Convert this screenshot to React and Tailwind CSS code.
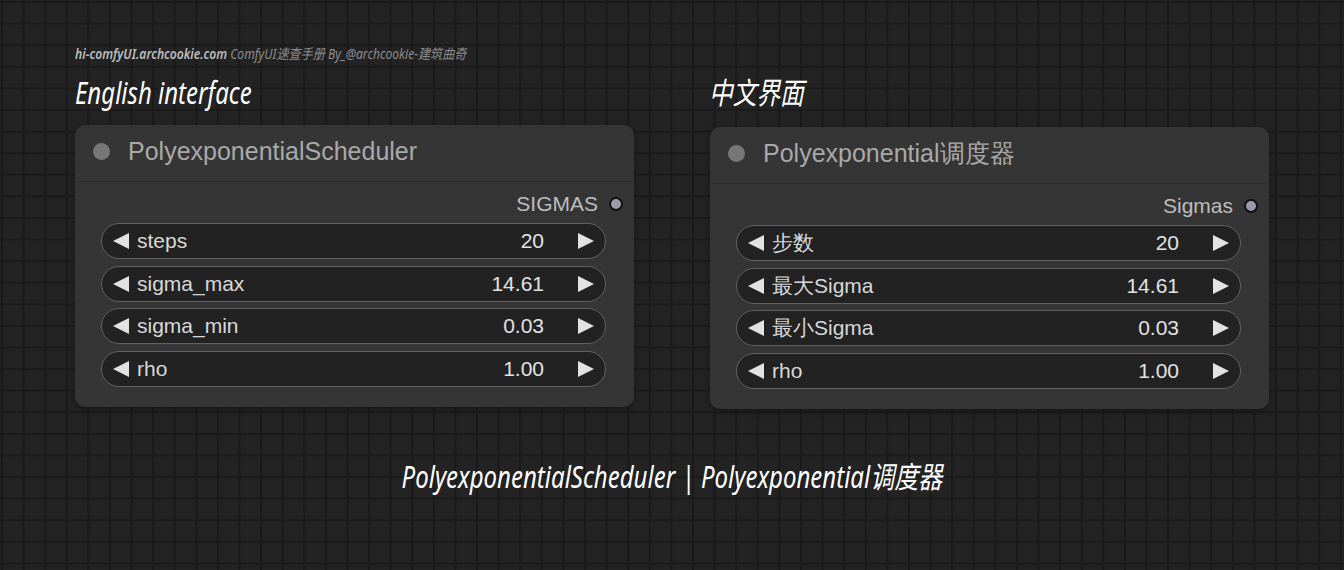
import React from 'react';

const sans = 'font-["Liberation_Sans",Arial,sans-serif]';
const cond = 'font-["Noto_Sans","Noto_Sans_CJK_SC",sans-serif]';

function Arrow({ dir }) {
  return (
    <svg width="18" height="18" viewBox="0 0 18 18" className="shrink-0">
      {dir === 'left' ? (
        <polygon points="17,1 17,17 1,9" fill="#e2e2e2" />
      ) : (
        <polygon points="1,1 1,17 17,9" fill="#e2e2e2" />
      )}
    </svg>
  );
}

function Widget({ label, value }) {
  return (
    <div className="h-[36px] flex items-center rounded-full bg-[#222222] border-[1.5px] border-[#626262] pl-[10px] pr-[10px]">
      <Arrow dir="left" />
      <span className="ml-[7px] text-[21px] text-[#d8d8d8] flex-1">{label}</span>
      <span className="text-[21px] text-[#e2e2e2] mr-[33px]">{value}</span>
      <Arrow dir="right" />
    </div>
  );
}

function Node({ title, output, widgets }) {
  return (
    <div className={`w-[559px] rounded-[10px] bg-[#353535] shadow-[0_2px_6px_rgba(0,0,0,0.35)] ${sans}`}>
      <div className="h-[57px] flex items-center pl-[18px] pb-[3px] border-b border-[#2b2b2b]">
        <div className="w-[17px] h-[17px] rounded-full bg-[#777777]" />
        <span className="ml-[18px] text-[25px] text-[#a9a9a9]">{title}</span>
      </div>
      <div className="pt-[11px] pb-[20px] pl-[26px] pr-[28px]">
        <div className="h-[22px] flex items-center justify-end mb-[8px] -mr-[17px]">
          <span className="text-[21px] text-[#bdbdbd]">{output}</span>
          <div className="ml-[11px] w-[14px] h-[14px] rounded-full bg-[#9a9aaa] border-2 border-[#111111]" />
        </div>
        <div className="flex flex-col gap-[6.5px]">
          {widgets.map((w) => (
            <Widget key={w[0]} label={w[0]} value={w[1]} />
          ))}
        </div>
      </div>
    </div>
  );
}

export default function App() {
  return (
    <div className="w-[1344px] h-[570px] overflow-hidden bg-[#232323] bg-[linear-gradient(#1a1a1a_2px,transparent_2px),linear-gradient(90deg,#1a1a1a_2px,transparent_2px)] bg-[size:21.6px_21.6px] bg-[position:1px_1px]">
      <div className="pt-[45px] pl-[75px]">
        <div className={`h-[18px] text-[14px] italic ${cond} leading-[18px]`}>
          <span className="inline-block whitespace-nowrap origin-left scale-x-[0.865]">
            <span className="text-[#bcbcbc] font-semibold">hi-comfyUI.archcookie.com</span>
            <span className="text-[#8c8c8c]"> ComfyUI速查手册 By_@archcookie-建筑曲奇</span>
          </span>
        </div>
        <div className="flex gap-[76px] mt-[14px]">
          <div className="flex flex-col">
            <div className={`h-[48px] text-[30px] italic text-white ${cond} leading-[32px]`}>
              <span className="inline-block whitespace-nowrap origin-left scale-x-[0.8]">English interface</span>
            </div>
            <Node
              title="PolyexponentialScheduler"
              output="SIGMAS"
              widgets={[
                ['steps', '20'],
                ['sigma_max', '14.61'],
                ['sigma_min', '0.03'],
                ['rho', '1.00'],
              ]}
            />
          </div>
          <div className="flex flex-col">
            <div className={`h-[50px] text-[30px] italic text-white ${cond} leading-[32px] -ml-[1px]`}>
              <span className="inline-block whitespace-nowrap origin-left scale-x-[0.79]">中文界面</span>
            </div>
            <Node
              title="Polyexponential调度器"
              output="Sigmas"
              widgets={[
                ['步数', '20'],
                ['最大Sigma', '14.61'],
                ['最小Sigma', '0.03'],
                ['rho', '1.00'],
              ]}
            />
          </div>
        </div>
      </div>
      <div className={`mt-[50px] text-center text-[30px] italic text-white ${cond} leading-[36px]`}>
        <span className="inline-block whitespace-nowrap origin-center scale-x-[0.8]">
          PolyexponentialScheduler | Polyexponential调度器
        </span>
      </div>
    </div>
  );
}
